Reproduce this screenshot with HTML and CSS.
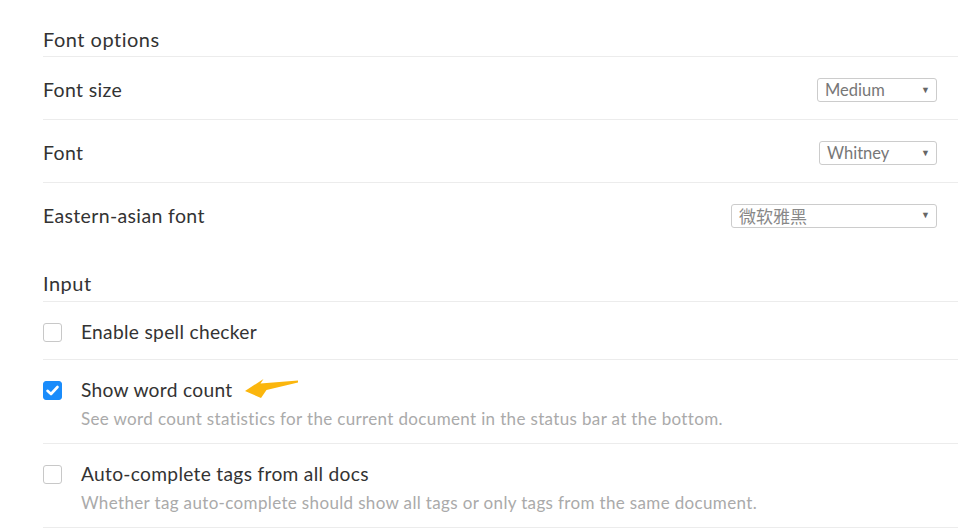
FILE: index.html
```html
<!DOCTYPE html>
<html>
<head>
<meta charset="utf-8">
<link rel="stylesheet" href="styles.css">
</head>
<body>
<div class="page">
  <h2 class="heading first">Font options</h2>
  <div class="row">
    <span class="label">Font size</span>
    <div class="select w-medium"><span>Medium</span><span class="caret">▼</span></div>
  </div>
  <div class="row">
    <span class="label">Font</span>
    <div class="select w-whitney"><span>Whitney</span><span class="caret">▼</span></div>
  </div>
  <div class="row last">
    <span class="label">Eastern-asian font</span>
    <div class="select w-cjk"><span class="cjk">微软雅黑</span><span class="caret">▼</span></div>
  </div>

  <h2 class="heading second">Input</h2>
  <div class="check-row single">
    <span class="box"></span>
    <div class="text">
      <div class="title">Enable spell checker</div>
    </div>
  </div>
  <div class="check-row">
    <span class="box checked">
      <svg width="19" height="19" viewBox="0 0 19 19"><path d="M4.5 9.8 L8 13 L14.5 6" fill="none" stroke="#fff" stroke-width="2.6" stroke-linecap="round" stroke-linejoin="round"/></svg>
    </span>
    <div class="text">
      <div class="title">Show word count</div>
      <div class="desc">See word count statistics for the current document in the status bar at the bottom.</div>
    </div>
    <svg class="arrow" width="56" height="23" viewBox="244 377 56 23"><path d="M245 391 L263.5 379 L260.5 383.5 L298 380.5 L298 382.5 L266.5 390 L261 398 Z" fill="#fbb60d"/></svg>
  </div>
  <div class="check-row">
    <span class="box"></span>
    <div class="text">
      <div class="title">Auto-complete tags from all docs</div>
      <div class="desc">Whether tag auto-complete should show all tags or only tags from the same document.</div>
    </div>
  </div>
</div>
</body>
</html>
```

FILE: styles.css
```css
* { box-sizing: border-box; }
html, body { margin: 0; padding: 0; background: #fff; }
body {
  font-family: Lato, "Open Sans", "Liberation Sans", sans-serif;
  color: #333;
  overflow: hidden;
}
.page {
  margin-left: 43px;
  width: 915px;
}
.heading {
  margin: 0;
  font-size: 20px;
  font-weight: 400;
  letter-spacing: 0.5px;
  line-height: 24px;
  padding-bottom: 4px;
  border-bottom: 1px solid #ececec;
}
.heading.first { margin-top: 27px; padding-bottom: 5px; }
.heading.second { margin-top: 25px; padding-bottom: 6px; }
.row {
  height: 63px;
  display: flex;
  align-items: center;
  justify-content: space-between;
  border-bottom: 1px solid #ececec;
  padding-right: 21px;
  padding-top: 4px;
}
.row.last { border-bottom: none; padding-top: 2px; }
.label { font-size: 19.5px; line-height: 24px; letter-spacing: 0.35px; }
.select {
  height: 24px;
  border: 1px solid #ccc;
  border-radius: 3px;
  display: flex;
  align-items: center;
  justify-content: space-between;
  padding: 0 6px 0 7px;
  font-size: 16.5px;
  color: #777;
}
.w-medium { width: 120px; }
.w-whitney { width: 118px; }
.w-cjk { width: 206px; }
.cjk { font-family: "Noto Sans CJK SC", sans-serif; color: #888; font-size: 17px; }
.caret { font-size: 9px; color: #666; margin-top: -2px; }
.check-row {
  position: relative;
  display: flex;
  align-items: flex-start;
  padding: 18px 0 12px;
  border-bottom: 1px solid #ececec;
}
.check-row.single { padding-bottom: 15px; }
.box {
  width: 19px;
  height: 19px;
  border: 1px solid #c8c8c8;
  border-radius: 3px;
  margin-top: 3px;
  margin-right: 19px;
  flex: none;
  display: flex;
}
.box.checked { background: #1a8cfb; border-color: #1a8cfb; }
.box.checked svg { margin: -1px; }
.title { font-size: 19.2px; line-height: 24px; letter-spacing: 0.3px; }
.desc { font-size: 17px; line-height: 24px; color: #aaa; margin-top: 5px; letter-spacing: 0.35px; }
.arrow { position: absolute; left: 201px; top: 17px; }
```
